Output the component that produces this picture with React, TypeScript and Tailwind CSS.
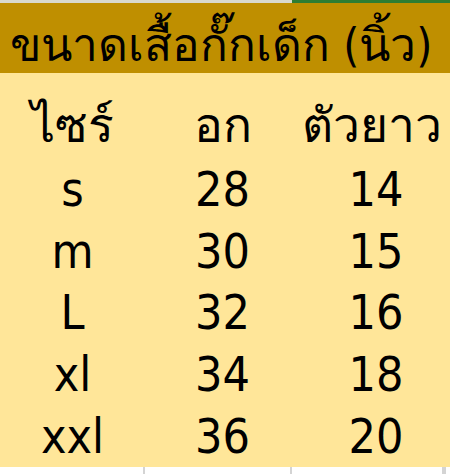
const rows = [
  { size: 's', chest: '28', length: '14' },
  { size: 'm', chest: '30', length: '15' },
  { size: 'L', chest: '32', length: '16' },
  { size: 'xl', chest: '34', length: '18' },
  { size: 'xxl', chest: '36', length: '20' },
];

const font = { fontFamily: '"DejaVu Sans Condensed", "DejaVu Sans", "Noto Sans", sans-serif' };

function Row({ a, b, c, h, last = 'pl-[14px]' }: { a: string; b: string; c: string; h: string; last?: string }) {
  return (
    <div className={`flex items-center text-black ${h}`}>
      <div className="w-[145px] text-center">{a}</div>
      <div className="w-[147px] pl-[8px] text-center">{b}</div>
      <div className={`w-[154px] text-center ${last}`}>{c}</div>
    </div>
  );
}

export default function App() {
  return (
    <div className="w-[450px] h-[474px] bg-white flex flex-col overflow-hidden" style={font}>
      {/* top strip */}
      <div className="h-[3px] flex flex-shrink-0">
        <div className="w-[292px] bg-[#d9d9cc]" />
        <div className="flex-1 bg-[#2e7d32]" />
      </div>

      {/* title */}
      <div className="h-[70px] flex-shrink-0 bg-[#bf8f00] flex items-end pl-[10px] text-black text-[46px] leading-none pb-[5px] whitespace-nowrap">
        ขนาดเสื้อกั๊กเด็ก (นิ้ว)
      </div>

      {/* table body */}
      <div className="h-[394px] flex-shrink-0 bg-[#ffe699] flex flex-col text-[48px] leading-none">
        <Row a="ไซร์" b="อก" c="ตัวยาว" h="h-[85px] pt-[18px]" last="pl-[6px]" />
        {rows.map((r) => (
          <Row key={r.size} a={r.size} b={r.chest} c={r.length} h="h-[61.8px]" />
        ))}
      </div>

      {/* next row grid */}
      <div className="flex-1 flex">
        <div className="w-[145px] border-r-2 border-[#d4d4d4]" />
        <div className="w-[147px] border-r-2 border-[#d4d4d4]" />
        <div className="w-[154px] border-r-4 border-[#d4d4d4]" />
      </div>
    </div>
  );
}
